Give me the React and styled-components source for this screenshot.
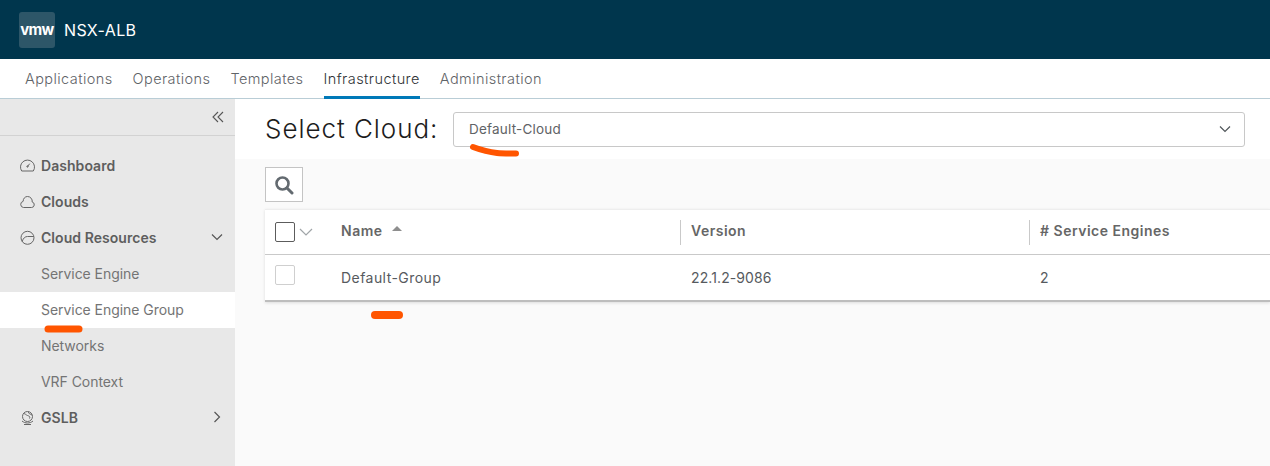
import React from "react";
import styled, { createGlobalStyle } from "styled-components";

const Global = createGlobalStyle`
  html, body { margin: 0; padding: 0; background: #fafafa; }
  body { font-family: Inter, "Open Sans", "Liberation Sans", sans-serif; overflow: hidden; }
  * { box-sizing: border-box; }
`;

const Page = styled.div`
  position: relative;
  width: 1270px;
  height: 466px;
  overflow: hidden;
  display: flex;
  flex-direction: column;
`;

const Header = styled.header`
  height: 59px;
  background: #00364d;
  display: flex;
  align-items: center;
  padding-left: 19px;
  gap: 9px;
  flex: none;
`;

const Logo = styled.div`
  width: 36px;
  height: 36px;
  border-radius: 3px;
  background: #2d5668;
  display: flex;
  align-items: center;
  justify-content: center;
  color: #fff;
  font-size: 15px;
  font-weight: 700;
  letter-spacing: -0.7px;
`;

const Brand = styled.div`
  color: #fff;
  font-size: 16px;
  font-weight: 400;
  letter-spacing: 0.35px;
`;

const TopNav = styled.nav`
  height: 40px;
  background: #fff;
  border-bottom: 1px solid #b9cdd6;
  display: flex;
  padding-left: 25px;
  gap: 20px;
  flex: none;
`;

const Tab = styled.div`
  height: 40px;
  line-height: 40px;
  font-size: 14.5px;
  font-weight: 300;
  letter-spacing: 0.42px;
  color: ${(p) => (p.$active ? "#2f3336" : "#5f6468")};
  border-bottom: ${(p) => (p.$active ? "3px solid #0079b8" : "none")};
`;

const Body = styled.div`
  display: flex;
  flex: 1;
  min-height: 0;
`;

const Sidebar = styled.aside`
  width: 235px;
  background: #e8e8e8;
  flex: none;
`;

const Collapse = styled.div`
  height: 37px;
  border-bottom: 1px solid #d2d2d2;
  margin-bottom: 12px;
  display: flex;
  align-items: center;
  justify-content: flex-end;
  padding: 0 11px 0 0;
  color: #565656;
`;

const NavItem = styled.div`
  height: 36px;
  display: flex;
  align-items: center;
  padding: 0 12px 2px ${(p) => (p.$sub ? "41px" : "20px")};
  font-size: 14px;
  letter-spacing: ${(p) => (p.$sub ? "-0.05px" : "0.05px")};
  font-weight: ${(p) => (p.$sub ? 400 : 600)};
  color: ${(p) => (p.$sub ? "#747474" : "#5e5e5e")};
  background: ${(p) => (p.$active ? "#fff" : "transparent")};
`;

const NavIcon = styled.svg`
  width: 15px;
  height: 15px;
  margin-right: 6px;
  flex: none;
  fill: none;
  stroke: #666;
  stroke-width: 1;
`;

const Caret = styled.svg`
  width: 12px;
  height: 12px;
  margin-left: auto;
  fill: none;
  stroke: ${(p) => p.$color || "#565656"};
  stroke-width: 1.2;
`;

const HeadCaret = styled(Caret)`
  width: 14px;
  margin: 0;
`;

const Main = styled.main`
  flex: 1;
  min-width: 0;
  display: flex;
  flex-direction: column;
`;

const CloudBar = styled.div`
  height: 60px;
  background: #fff;
  display: flex;
  padding: 13px 25px 0 30px;
  flex: none;
`;

const CloudLabel = styled.div`
  font-size: 26px;
  font-weight: 300;
  letter-spacing: 0.95px;
  color: #1c1c1c;
  width: 188px;
  height: 34px;
  line-height: 33px;
  flex: none;
`;

const Select = styled.div`
  flex: 1;
  height: 35px;
  border: 1px solid #c8c8c8;
  border-radius: 3px;
  display: flex;
  align-items: center;
  padding: 0 13px 2px 15px;
  font-size: 13.5px;
  letter-spacing: 0.2px;
  color: #5f6366;
`;

const Content = styled.div`
  flex: 1;
  padding: 8px 0 0 30px;
  background: #fafafa;
`;

const SearchButton = styled.div`
  width: 38px;
  height: 35px;
  background: #fff;
  border: 1px solid #c4c4c4;
  display: flex;
  align-items: center;
  justify-content: center;
`;

const Table = styled.div`
  margin-top: 7px;
  background: #fff;
  height: 93px;
  border-top: 1px solid #eeeeee;
  border-bottom: 2px solid #bdbdbd;
  box-shadow: 0 1px 3px rgba(0, 0, 0, 0.12);
`;

const Row = styled.div`
  display: grid;
  grid-template-columns: 76px 339px 349px 1fr;
  align-items: center;
  height: 45px;
  border-bottom: ${(p) => (p.$head ? "1px solid #c9c9c9" : "none")};
`;

const CheckCell = styled.div`
  display: flex;
  align-items: center;
  padding-left: 10px;
  gap: 4px;
`;

const CheckBox = styled.div`
  width: 20px;
  height: 20px;
  margin-top: ${(p) => (p.$dark ? "0" : "-5px")};
  border-radius: 2px;
  background: #fff;
  border: 1px solid ${(p) => (p.$dark ? "#5c5c5c" : "#cfcfcf")};
`;

const HeadCell = styled.div`
  height: 25px;
  padding: 0 0 3px ${(p) => (p.$first ? "0" : "10px")};
  font-size: 14px;
  font-weight: 600;
  letter-spacing: 0.5px;
  color: #666;
  display: flex;
  align-items: center;
  gap: 9px;
  border-left: ${(p) => (p.$first ? "none" : "1px solid #c9c9c9")};
`;

const Cell = styled.div`
  padding-left: ${(p) => (p.$first ? "0" : "11px")};
  font-size: 14px;
  letter-spacing: ${(p) => p.$spacing || "0.45px"};
  color: #565a5e;
`;

const SortUp = styled.span`
  width: 0;
  height: 0;
  margin-top: -5px;
  border-left: 5px solid transparent;
  border-right: 5px solid transparent;
  border-bottom: 5px solid #8e8e8e;
`;

const Ink = styled.svg`
  position: absolute;
  left: 0;
  top: 0;
  width: 1270px;
  height: 466px;
  pointer-events: none;
  fill: none;
  stroke: #ff5500;
  stroke-linecap: round;
  stroke-linejoin: round;
`;

const Down = (props) => (
  <Caret viewBox="0 0 12 12" {...props}><path d="M1 3.5l5 5 5-5" /></Caret>
);

export default function App() {
  return (
    <Page>
      <Global />
      <Header>
        <Logo>vmw</Logo>
        <Brand>NSX-ALB</Brand>
      </Header>
      <TopNav>
        <Tab>Applications</Tab>
        <Tab>Operations</Tab>
        <Tab>Templates</Tab>
        <Tab $active>Infrastructure</Tab>
        <Tab>Administration</Tab>
      </TopNav>
      <Body>
        <Sidebar>
          <Collapse>
            <svg width="12" height="12" viewBox="0 0 12 12" fill="none" stroke="currentColor" strokeWidth="1.1">
              <path d="M6 1L1 6l5 5M11 1L6 6l5 5" />
            </svg>
          </Collapse>
          <NavItem>
            <NavIcon viewBox="0 0 15 15">
              <path d="M1.700 13h11.600a7 7 0 1 0-11.600 0z" />
              <path d="M7.500 8.500l2.200-2.800" />
              <circle cx="7.500" cy="8.500" r=".7" />
            </NavIcon>
            Dashboard
          </NavItem>
          <NavItem>
            <NavIcon viewBox="0 0 15 15">
              <path d="M3.500 13.500h8a2.800 2.800 0 0 0 .7-5.500A4.800 4.800 0 0 0 7.500 2.500C5 2.500 3.200 4.500 3.100 7.400a3.100 3.100 0 0 0 .4 6.100z" />
            </NavIcon>
            Clouds
          </NavItem>
          <NavItem>
            <NavIcon viewBox="0 0 15 15">
              <circle cx="7.500" cy="7.800" r="6.500" />
              <path d="M2.200 11.500c1-3.500 3-5 5.300-5h6.300" />
            </NavIcon>
            Cloud Resources
            <Down />
          </NavItem>
          <NavItem $sub>Service Engine</NavItem>
          <NavItem $sub $active>Service Engine Group</NavItem>
          <NavItem $sub>Networks</NavItem>
          <NavItem $sub>VRF Context</NavItem>
          <NavItem>
            <NavIcon viewBox="0 0 15 15">
              <circle cx="7.500" cy="6.500" r="5" />
              <path d="M3.500 3.500c2 .2 2.500 1.500 4 2s3 1 2 3M8.500 1.800C8 3.500 10 4 12 5" />
              <path d="M2 11c1.500 1.300 3.500 2 5.500 2s4-.7 5.500-2M4 14.500h7" />
            </NavIcon>
            GSLB
            <Caret viewBox="0 0 12 12"><path d="M3.500 1l5 5-5 5" /></Caret>
          </NavItem>
        </Sidebar>
        <Main>
          <CloudBar>
            <CloudLabel>Select Cloud:</CloudLabel>
            <Select>
              Default-Cloud
              <Down $color="#50565a" />
            </Select>
          </CloudBar>
          <Content>
            <SearchButton>
              <svg width="20" height="20" viewBox="0 0 20 20" fill="none" stroke="#636a70" strokeLinecap="round">
                <circle cx="8.500" cy="8.500" r="6" strokeWidth="2.600" />
                <path d="M13 13l5 5" strokeWidth="3" />
              </svg>
            </SearchButton>
            <Table>
              <Row $head>
                <CheckCell>
                  <CheckBox $dark />
                  <HeadCaret viewBox="0 0 14 12" $color="#a0a5a8"><path d="M1 3l6 6 6-6" /></HeadCaret>
                </CheckCell>
                <HeadCell $first>Name <SortUp /></HeadCell>
                <HeadCell>Version</HeadCell>
                <HeadCell># Service Engines</HeadCell>
              </Row>
              <Row>
                <CheckCell><CheckBox /></CheckCell>
                <Cell $first>Default-Group</Cell>
                <Cell $spacing="0.1px">22.1.2-9086</Cell>
                <Cell>2</Cell>
              </Row>
            </Table>
          </Content>
        </Main>
      </Body>
      <Ink viewBox="0 0 1270 466">
        <path d="M473 147c8 3 14 5 24 6 6 .5 12 .5 19 .5" strokeWidth="6" />
        <path d="M48 329h31" strokeWidth="7" />
        <path d="M375 315h24" strokeWidth="8" />
      </Ink>
    </Page>
  );
}
